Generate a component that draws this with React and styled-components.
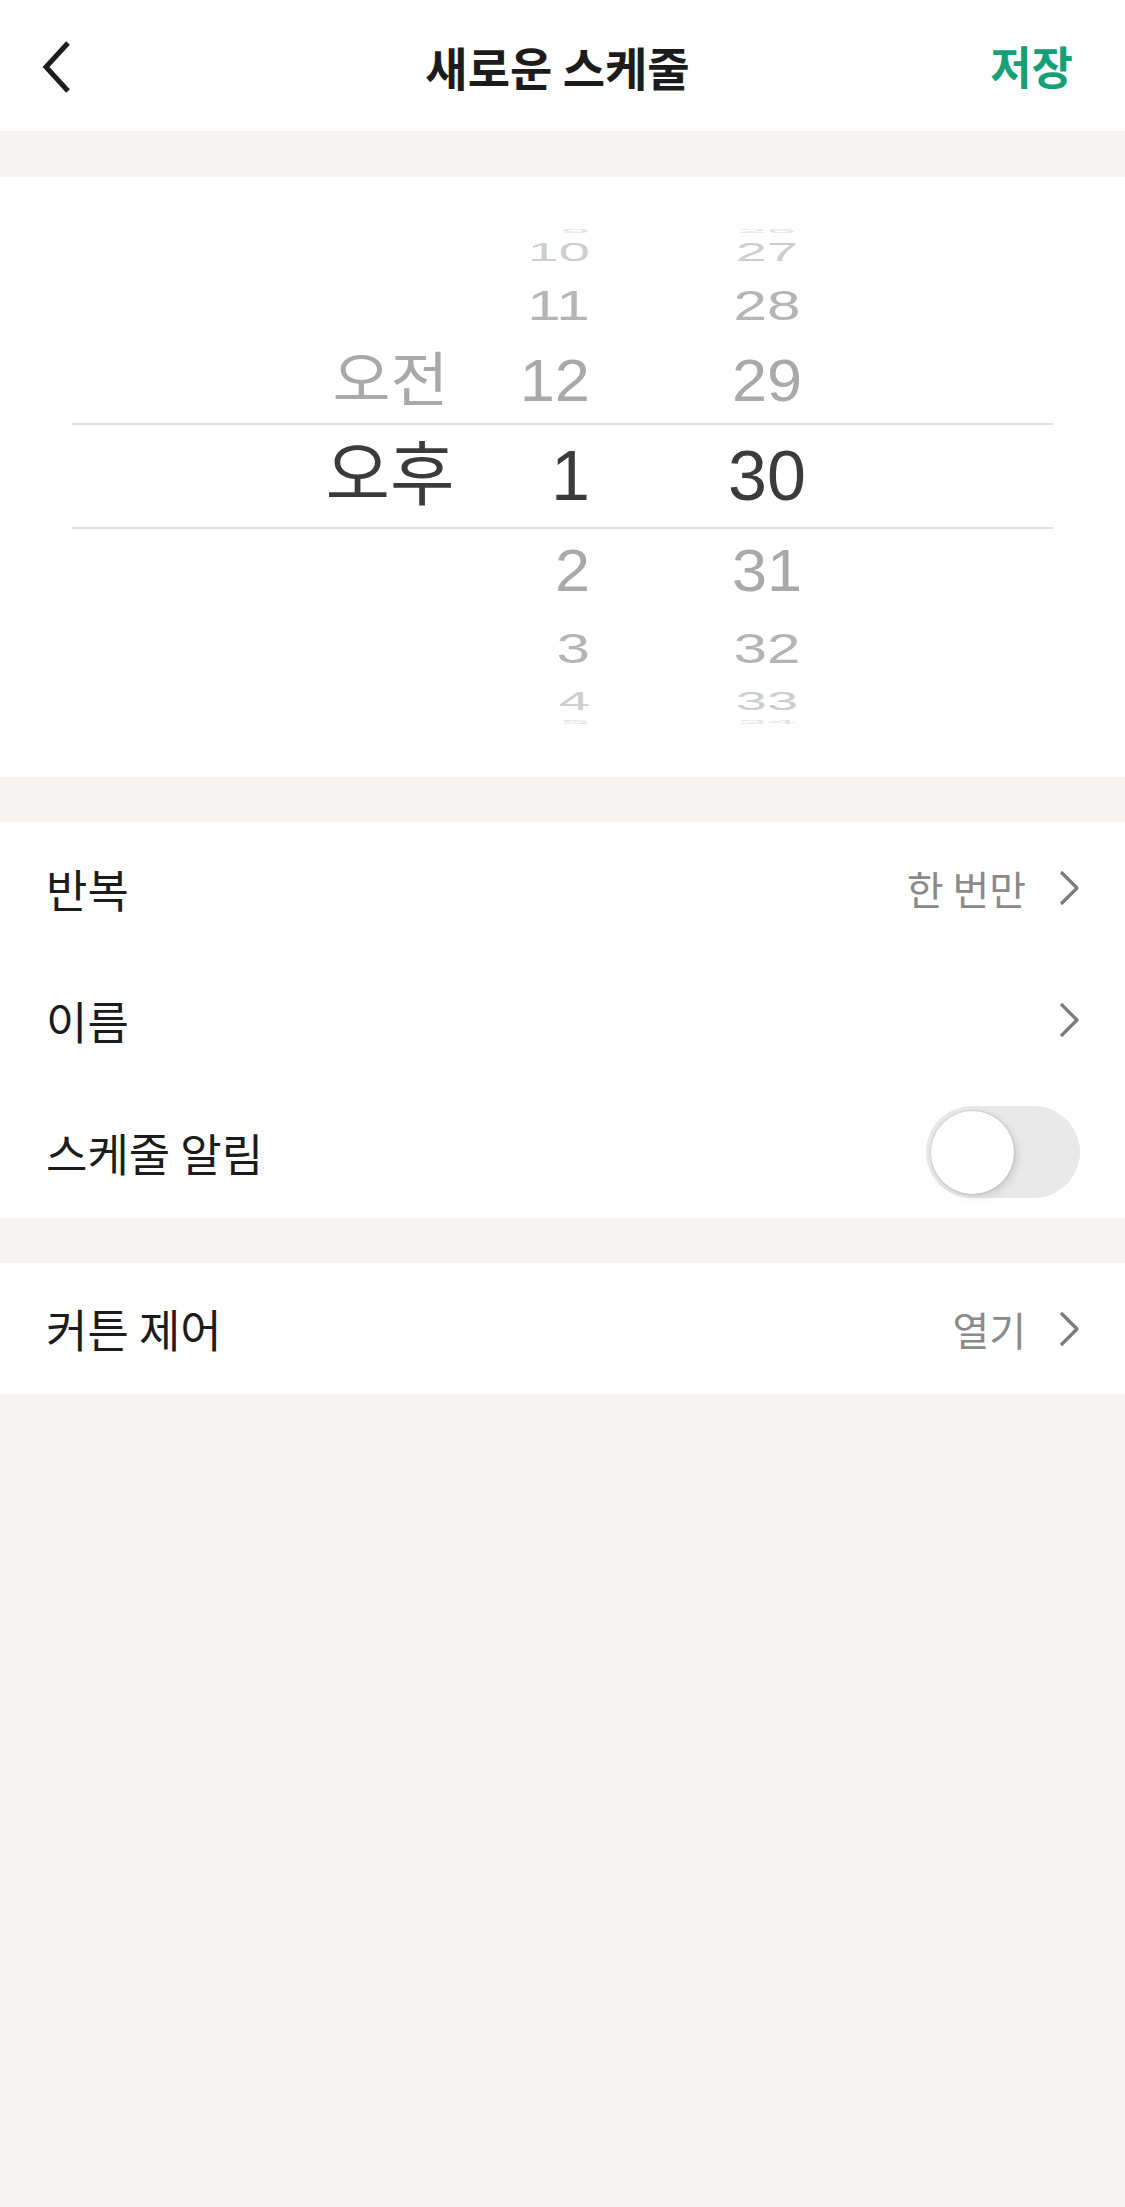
import styled, { createGlobalStyle, css } from "styled-components";

const GlobalStyle = createGlobalStyle`
  html, body {
    margin: 0;
    padding: 0;
    background: #f6f3f0;
  }
  body {
    font-family: "Liberation Sans", "Noto Sans CJK KR", sans-serif;
  }
`;

// projected look of each wheel slot, by distance from the selected one
const SLOT = [
  { h: 102, sx: 1, sy: 1, color: "#3b3b3b" },
  { h: 84, sx: 0.9, sy: 0.84, color: "#a9a9a9" },
  { h: 69, sx: 0.86, sy: 0.62, color: "#b5b5b5" },
  { h: 37, sx: 0.8, sy: 0.38, color: "#cecece" },
  { h: 5, sx: 0.75, sy: 0.08, color: "#e2e2e2" },
];

const COLUMNS = [
  { key: "ampm", width: 200, align: "center", top: ["", "", "", "오전"], mid: "오후", bottom: ["", "", "", ""] },
  { key: "hour", width: 100, align: "right", top: ["9", "10", "11", "12"], mid: "1", bottom: ["2", "3", "4", "5"] },
  { key: "min", width: 150, align: "center", gap: 102, top: ["26", "27", "28", "29"], mid: "30", bottom: ["31", "32", "33", "34"] },
];

const Chevron = () => (
  <svg width="22" height="36" viewBox="0 0 22 36">
    <polyline points="3,2 19,18 3,34" fill="none" stroke="#7b7b7b" strokeWidth="3.2" strokeLinejoin="round" />
  </svg>
);

const BackIcon = () => (
  <svg width="30" height="54" viewBox="0 0 30 54">
    <polyline points="26,3 4,27 26,51" fill="none" stroke="#1c1c1c" strokeWidth="5" />
  </svg>
);

const App = () => {
  const wheelRow = (part) =>
    COLUMNS.map((c) => (
      <WheelCol key={c.key} $w={c.width} $gap={c.gap}>
        {part === "mid" ? (
          <WheelItem $d={0} $align={c.align}>
            <WheelText $d={0} $align={c.align}>{c.mid}</WheelText>
          </WheelItem>
        ) : (
          c[part].map((t, i) => {
            const d = part === "top" ? 4 - i : i + 1;
            return (
              <WheelItem key={i} $d={d} $align={c.align}>
                <WheelText $d={d} $align={c.align}>{t}</WheelText>
              </WheelItem>
            );
          })
        )}
      </WheelCol>
    ));

  return (
    <Page>
      <GlobalStyle />
      <Header>
        <BackButton>
          <BackIcon />
        </BackButton>
        <Title>새로운 스케줄</Title>
        <SaveButton>저장</SaveButton>
      </Header>

      <Picker>
        <Wheel>
          <WheelRow>{wheelRow("top")}</WheelRow>
          <WheelRow $selected>{wheelRow("mid")}</WheelRow>
          <WheelRow>{wheelRow("bottom")}</WheelRow>
        </Wheel>
      </Picker>

      <Card>
        <Row>
          <Label>반복</Label>
          <Value>
            한 번만
            <Chevron />
          </Value>
        </Row>
        <Row>
          <Label>이름</Label>
          <Value>
            <Chevron />
          </Value>
        </Row>
        <Row>
          <Label>스케줄 알림</Label>
          <Toggle>
            <Knob />
          </Toggle>
        </Row>
      </Card>

      <Card>
        <Row $h={131}>
          <Label>커튼 제어</Label>
          <Value>
            열기
            <Chevron />
          </Value>
        </Row>
      </Card>
    </Page>
  );
};

const Page = styled.div`
  min-height: 100vh;
  background: #f6f3f0;
  font-family: "Liberation Sans", "Noto Sans CJK KR", sans-serif;
`;

const Header = styled.div`
  height: 131px;
  background: #fff;
  display: flex;
  align-items: center;
  justify-content: space-between;
  padding: 0 52px 0 42px;
  box-sizing: border-box;
  margin-bottom: 46px;
`;

const BackButton = styled.div`
  width: 110px;
  display: flex;
  align-items: center;
  padding-top: 2px;
`;

const Title = styled.div`
  font-family: "Noto Sans CJK KR", sans-serif;
  font-size: 46px;
  font-weight: 700;
  color: #1c1c1c;
`;

const SaveButton = styled.div`
  width: 110px;
  text-align: right;
  font-family: "Noto Sans CJK KR", sans-serif;
  font-size: 45px;
  font-weight: 700;
  color: #17a077;
`;

const Picker = styled.div`
  background: #fff;
  height: 600px;
  box-sizing: border-box;
  padding: 51px 72px 0;
  margin-bottom: 45px;
  overflow: hidden;
`;

const Wheel = styled.div`
  display: flex;
  flex-direction: column;
`;

const WheelRow = styled.div`
  display: flex;
  padding-left: 218px;
  ${(p) =>
    p.$selected &&
    css`
      border-top: 2px solid #e2e2e2;
      border-bottom: 2px solid #e2e2e2;
    `}
`;

const WheelCol = styled.div`
  width: ${(p) => p.$w}px;
  margin-left: ${(p) => p.$gap || 0}px;
  display: flex;
  flex-direction: column;
`;

const WheelItem = styled.div`
  height: ${(p) => SLOT[p.$d].h}px;
  display: flex;
  align-items: center;
  justify-content: ${(p) => (p.$align === "right" ? "flex-end" : "center")};
  overflow: visible;
`;

const WheelText = styled.span`
  display: inline-block;
  font-size: 70px;
  line-height: 1;
  white-space: nowrap;
  color: ${(p) => SLOT[p.$d].color};
  transform: scale(${(p) => SLOT[p.$d].sx}, ${(p) => SLOT[p.$d].sy});
  transform-origin: ${(p) => (p.$align === "right" ? "right center" : "center")};
`;

const Card = styled.div`
  background: #fff;
  margin-bottom: 45px;
`;

const Row = styled.div`
  height: ${(p) => p.$h || 132}px;
  display: flex;
  align-items: center;
  justify-content: space-between;
  padding: 0 45px 0 46px;
`;

const Label = styled.div`
  font-family: "Noto Sans CJK KR", sans-serif;
  font-size: 45px;
  color: #1c1c1c;
`;

const Value = styled.div`
  display: flex;
  align-items: center;
  gap: 32px;
  font-family: "Noto Sans CJK KR", sans-serif;
  font-size: 40px;
  color: #8a8a8a;
`;

const Toggle = styled.div`
  width: 154px;
  height: 92px;
  border-radius: 46px;
  background: #e9e9ea;
  display: flex;
  align-items: center;
  padding: 0 5px;
  box-sizing: border-box;
`;

const Knob = styled.div`
  width: 83px;
  height: 83px;
  border-radius: 50%;
  background: #fff;
  box-shadow: 0 0 0 1.5px rgba(0, 0, 0, 0.06), 3px 3px 8px rgba(0, 0, 0, 0.12);
`;

export default App;
